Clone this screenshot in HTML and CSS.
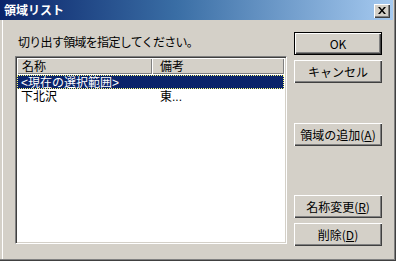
FILE: index.html
```html
<!DOCTYPE html>
<html lang="ja">
<head>
<meta charset="utf-8">
<title>領域リスト</title>
<link rel="stylesheet" href="styles.css">
</head>
<body>
<div class="window">
  <div class="titlebar">
    <span class="title">領域リスト</span>
    <span class="close"><svg width="8" height="7" viewBox="0 0 8 7"><path d="M0 0h2l2 2.5L6 0h2L5 3.5 8 7H6L4 4.5 2 7H0l3-3.5z" fill="#000"/></svg></span>
  </div>
  <div class="content">
    <div class="left">
      <div class="label">切り出す領域を指定してください。</div>
      <div class="listbox">
        <div class="header">
          <div class="hcell c1">名称</div>
          <div class="hcell c2">備考</div>
        </div>
        <div class="row selected"><span class="c1">&lt;現在の選択範囲&gt;</span><span class="c2"></span></div>
        <div class="row"><span class="c1">下北沢</span><span class="c2">東...</span></div>
      </div>
    </div>
    <div class="right">
      <button class="btn default b-ok">OK</button>
      <button class="btn b-cancel">キャンセル</button>
      <button class="btn b-add">領域の追加(<u>A</u>)</button>
      <button class="btn b-rename">名称変更(<u>R</u>)</button>
      <button class="btn b-del">削除(<u>D</u>)</button>
    </div>
  </div>
</div>
</body>
</html>
```
FILE: styles.css
```css
html, body {
  margin: 0;
  padding: 0;
  background: #d4d0c8;
}
body {
  font-family: "Noto Sans CJK JP", "DejaVu Sans", sans-serif;
  font-size: 12px;
  color: #000;
}
.window {
  width: 396px;
  height: 261px;
  box-sizing: border-box;
  background: #d4d0c8;
  border-right: 1px solid #404040;
  border-bottom: 1px solid #404040;
  box-shadow: inset -1px -1px 0 #808080, inset 2px 0 0 #d4d0c8, inset 3px 0 0 #ffffff;
  display: flex;
  flex-direction: column;
}
.titlebar {
  height: 20px;
  margin-right: 2px;
  background: linear-gradient(to right, #0a246a 0%, #3a6ea5 45%, #a6caf0 100%);
  display: flex;
  align-items: center;
  padding-left: 4px;
  padding-right: 3px;
}
.title {
  color: #fff;
  font-weight: bold;
  font-size: 12px;
  flex: 1;
  line-height: 14px;
}
.close {
  width: 16px;
  height: 14px;
  box-sizing: border-box;
  background: #d4d0c8;
  box-shadow: inset 1px 1px 0 #fff, inset -1px -1px 0 #404040, inset -2px -2px 0 #808080;
  display: flex;
  align-items: center;
  justify-content: center;
  margin-top: 1px;
}
.content {
  flex: 1;
  display: flex;
  padding: 12px 0 0 15px;
}
.left {
  width: 272px;
  display: flex;
  flex-direction: column;
}
.label {
  height: 14px;
  line-height: 14px;
  margin-top: 3px;
  padding-left: 3px;
  letter-spacing: -0.7px;
}
.listbox {
  margin-top: 7px;
  height: 188px;
  box-sizing: border-box;
  background: #fff;
  border-top: 1px solid #808080;
  border-left: 1px solid #808080;
  border-right: 1px solid #fff;
  border-bottom: 1px solid #fff;
  box-shadow: inset 1px 1px 0 #404040, inset -1px -1px 0 #d4d0c8;
  padding: 1px 2px 2px 1px;
}
.header {
  display: flex;
  height: 16px;
}
.hcell {
  box-sizing: border-box;
  background: #d4d0c8;
  box-shadow: inset 1px 1px 0 #fff, inset -1px -1px 0 #808080;
  line-height: 15px;
  padding-left: 5px;
}
.hcell.c1 { width: 135px; }
.hcell.c2 { flex: 1; padding-left: 8px; }
.row {
  display: flex;
  height: 14px;
  padding-top: 3px;
  line-height: 11px;
  box-sizing: border-box;
  font-family: "Liberation Sans", "Noto Sans CJK JP", sans-serif;
}
.row .c1 { width: 135px; padding-left: 4px; box-sizing: border-box; }
.row .c2 { padding-left: 8px; }
.row.selected {
  background: #0a246a;
  color: #fff;
  outline: 1px dotted #ffff80;
  outline-offset: -1px;
  margin-top: 1px;
}
.right {
  margin-left: 7px;
  width: 88px;
  display: flex;
  flex-direction: column;
}
.btn {
  font-family: inherit;
  font-size: 12px;
  color: #000;
  width: 88px;
  height: 23px;
  padding: 0;
  margin: 0;
  border: none;
  background: #d4d0c8;
  box-shadow: inset 1px 1px 0 #fff, inset -1px -1px 0 #404040, inset -2px -2px 0 #808080;
  line-height: 14px;
}
.btn u { text-decoration: underline; }
.btn.default {
  box-shadow: inset 0 0 0 1px #000, inset 2px 2px 0 #fff, inset -2px -2px 0 #404040, inset -3px -3px 0 #808080;
}
.b-ok { margin-top: 0; }
.b-cancel { margin-top: 5px; }
.b-add { margin-top: 40px; }
.b-rename { margin-top: 49px; }
.b-del { margin-top: 5px; }
```
